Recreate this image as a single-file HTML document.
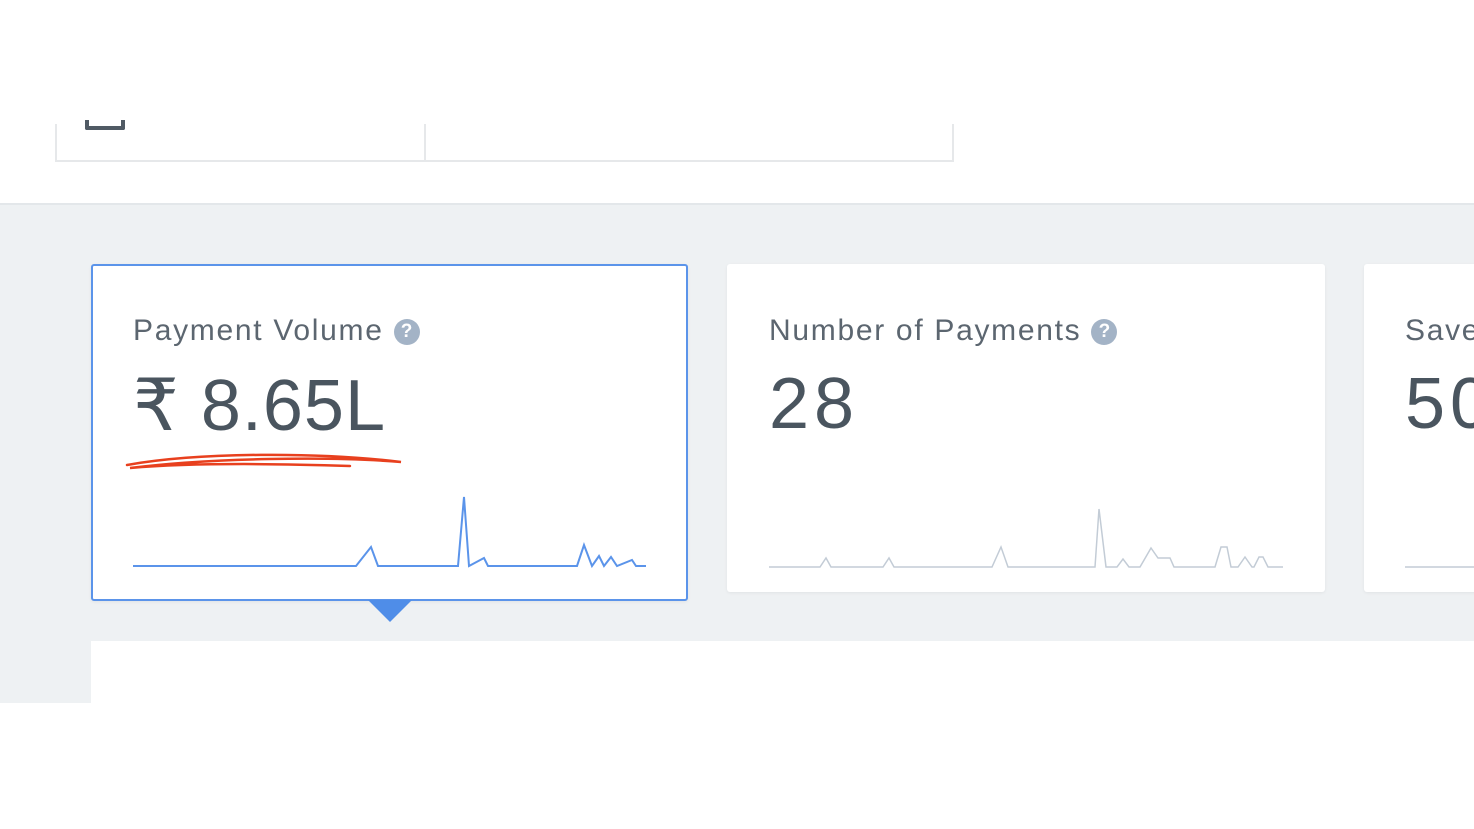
<!DOCTYPE html>
<html><head><meta charset="utf-8"><style>
*{margin:0;padding:0;box-sizing:border-box}
body{width:1474px;height:829px;background:#fff;position:relative;overflow:hidden;font-family:"Liberation Sans",sans-serif}
.abs{position:absolute}
.gray{left:0;top:203px;width:1474px;height:500px;background:#eef1f3;border-top:2px solid #e3e7ea}
.topbox{left:55px;top:124px;width:899px;height:38px;border:2px solid #e6e8ea;border-top:none;background:#fff}
.card{background:#fff;border-radius:3px;box-shadow:0 1px 3px rgba(0,0,0,.06)}
.title{font-size:30px;color:#5c6670;letter-spacing:1.7px;position:absolute;white-space:nowrap}
.val{font-size:72px;color:#4a555f;position:absolute;letter-spacing:1px;white-space:nowrap}
.q{display:inline-block;width:26px;height:26px;border-radius:50%;background:#a3b3c6;color:#fff;font-size:19px;text-align:center;line-height:26px;font-weight:bold;vertical-align:3px;margin-left:10px;letter-spacing:0}
</style></head><body>
<div class="abs topbox"></div>
<div class="abs" style="left:424px;top:124px;width:2px;height:38px;background:#e6e8ea"></div>
<div class="abs" style="left:85px;top:120px;width:40px;height:10px;border:4px solid #505a64;border-top:none;border-radius:0 0 2px 2px"></div>
<div class="abs gray"></div>
<div class="abs" style="left:91px;top:641px;width:1383px;height:62px;background:#fff"></div>

<div class="abs card" style="left:91px;top:264px;width:597px;height:337px;border:2px solid #5b94ea"></div>
<div class="abs" style="left:368px;top:600px;width:0;height:0;border-left:22px solid transparent;border-right:22px solid transparent;border-top:22px solid #4f8de8"></div>
<div class="title" style="left:133px;top:314px">Payment Volume<span class="q">?</span></div>
<div class="val" style="left:133px;top:363px">₹ 8.65L</div>

<div class="abs card" style="left:727px;top:264px;width:598px;height:328px"></div>
<div class="title" style="left:769px;top:314px">Number of Payments<span class="q">?</span></div>
<div class="val" style="left:769px;top:363px;letter-spacing:5px">28</div>

<div class="abs card" style="left:1364px;top:264px;width:120px;height:328px"></div>
<div class="title" style="left:1405px;top:314px">Save</div>
<div class="val" style="left:1405px;top:363px;letter-spacing:5px">50</div>

<svg class="abs" style="left:0;top:0" width="1474" height="829">
<path d="M127 465 C200 452,320 452,401 462 C330 456,210 458,130 468 C200 462,290 464,350 466" fill="none" stroke="#e8401e" stroke-width="2.5" stroke-linecap="round"/>
<polyline fill="none" stroke="#5b94ea" stroke-width="2" points="133,566 356,566 371,547 378,566 458,566 464,497 469,566 484,558 488,566 577,566 584,545 592,566 599,556 604,566 611,557 617,566 632,560 636,566 646,566"/>
<polyline fill="none" stroke="#c3ccd6" stroke-width="1.5" points="769,567 820,567 826,558 831,567 883,567 889,558 894,567 992,567 1001,547 1008,567 1095,567 1099,509 1106,567 1117,567 1123,559 1129,567 1140,567 1151,548 1158,558 1170,558 1174,567 1215,567 1221,547 1227,547 1231,567 1238,567 1245,557 1252,567 1254,567 1259,557 1263,557 1268,567 1283,567"/>
<polyline fill="none" stroke="#c3ccd6" stroke-width="1.5" points="1405,567 1474,567"/>
</svg>
</body></html>
